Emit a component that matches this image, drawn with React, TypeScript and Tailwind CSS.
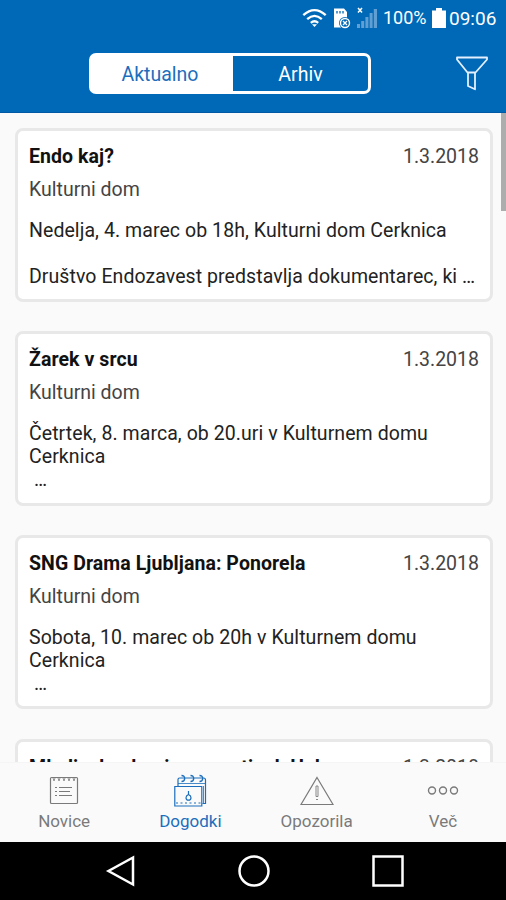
import type { ReactNode } from "react";

type Event = {
  title: string;
  date: string;
  place: string;
  lines: string[];
};

const events: Event[] = [
  {
    title: "Endo kaj?",
    date: "1.3.2018",
    place: "Kulturni dom",
    lines: ["Nedelja, 4. marec ob 18h, Kulturni dom Cerknica", "", "Društvo Endozavest predstavlja dokumentarec, ki …"],
  },
  {
    title: "Žarek v srcu",
    date: "1.3.2018",
    place: "Kulturni dom",
    lines: ["Četrtek, 8. marca, ob 20.uri v Kulturnem domu", "Cerknica", " …"],
  },
  {
    title: "SNG Drama Ljubljana: Ponorela",
    date: "1.3.2018",
    place: "Kulturni dom",
    lines: ["Sobota, 10. marec ob 20h v Kulturnem domu", "Cerknica", " …"],
  },
  {
    title: "Mladinska domicen martinek Hel",
    date: "1.3.2018",
    place: "Kulturni dom",
    lines: [],
  },
];

function StatusBar() {
  return (
    <div className="flex h-9 items-center justify-end pr-[9px] text-white">
      <svg className="mr-[7px] h-[20px] w-[25px]" viewBox="0 0 25 20" fill="none" stroke="currentColor" strokeWidth="2.3">
        <path d="M1.3 7.2Q12.5-3 23.7 7.2M5.2 11.2q7.3-6.6 14.6 0M8.8 14.8q3.7-3 7.4 0" />
        <path d="M10 16.2h5L12.5 19z" fill="currentColor" stroke="none" />
      </svg>
      <svg className="mr-[6px] h-[22px] w-[17px]" viewBox="0 0 17 22">
        <path d="M0 1.5h10L13 5v15.5H0z" fill="white" />
        <path d="M3 4v2.500M6 4v2.500M9 4v2.500" stroke="#0069b7" strokeWidth="1.3" />
        <circle cx="11" cy="16" r="6" fill="#0069b7" />
        <circle cx="11" cy="16" r="4.500" fill="none" stroke="white" strokeWidth="1.4" />
        <path d="M9 14l4 4M13 14l-4 4" stroke="white" strokeWidth="1.3" />
      </svg>
      <svg className="mr-[6px] h-[22px] w-[20px]" viewBox="0 0 20 22">
        <path d="M1 1l4 4.500M5 1L1 5.500" stroke="white" strokeWidth="1.5" />
        <path d="M0 17h3v4H0zM4.200 14h3v7h-3zM8.400 10h3v11h-3zM12.600 6h3v15h-3zM16.800 2H20v19h-3.200z" fill="#5f9fd3" />
      </svg>
      <span className="w-[43px] whitespace-nowrap text-[18px] leading-9">100%</span>
      <svg className="ml-[6px] mr-[3px] h-[22px] w-[14px]" viewBox="0 0 14 22" fill="currentColor">
        <path d="M4 1h6v2.500h4V21H0V3.500h4z" />
      </svg>
      <span className="w-[48px] whitespace-nowrap pt-px text-[19px] leading-9">09:06</span>
    </div>
  );
}

function Header() {
  return (
    <header className="h-[113px] shrink-0 border-b border-[#0059a5] bg-[#0069b7]">
      <StatusBar />
      <div className="flex items-start pl-[89px] pr-[17px] pt-[17px]">
        <div className="flex h-[41px] w-[282px] rounded-[7px] border-[3px] border-white bg-white text-[19.500px] leading-[37px]">
          <div className="w-[141px] pr-[5px] text-center text-[#1c6ebc]">Aktualno</div>
          <div className="flex-1 rounded-r-[4px] bg-[#0069b7] text-center text-white">Arhiv</div>
        </div>
        <svg className="ml-auto mt-[2px] h-[36px] w-[34px]" viewBox="0 0 34 36" fill="none" stroke="#e4f0ff" strokeWidth="1.8" strokeLinejoin="round">
          <path d="M2 2.500h30v2L20.500 17.500h-8L2 4.500z" />
          <path d="M13 17.500V31l7 3.300V17.500" />
        </svg>
      </div>
    </header>
  );
}

function EventCard({ event }: { event: Event }) {
  return (
    <article className="h-[174.500px] shrink-0 rounded-[8px] border-[3px] border-[#e8e8e8] bg-white px-[11px] pt-[14px] text-[19.500px] leading-[23px] text-[#222]">
      <div className="flex justify-between">
        <h2 className="whitespace-nowrap font-bold tracking-[0.070px] text-[#111]">{event.title}</h2>
        <span className="text-[#444]">{event.date}</span>
      </div>
      <p className="mt-[10px] text-[#444]">{event.place}</p>
      <div className="mt-[18px]">
        {event.lines.map((line, i) => (
          <p key={i} className="h-[23px] whitespace-pre tracking-[0.070px]">{line}</p>
        ))}
      </div>
    </article>
  );
}

function NewsIcon() {
  return (
    <svg className="h-[34px] w-[34px]" viewBox="0 0 34 34" fill="none" stroke="currentColor" strokeWidth="1.200">
      <rect x="3.500" y="4.500" width="27" height="26" rx="1" />
      <path d="M6 5l1 3l1-3M11 5l1 3l1-3M16 5l1 3l1-3M21 5l1 3l1-3M26 5l1 3l1-3" strokeWidth="0.800" />
      <path d="M8 14.500h2M8 18.500h2M8 22.500h2M12 14.500h13M12 18.500h11M12 22.500h13" />
    </svg>
  );
}

function CalendarIcon() {
  return (
    <svg className="h-[34px] w-[34px]" viewBox="0 0 34 34" fill="none" stroke="currentColor" strokeWidth="1.200">
      <path d="M5 13V6.500Q5 5 6.500 5h24Q32.500 5 32.500 7v23.500h-3" />
      <path d="M5 10.500h27.500M30.500 13v17" strokeWidth="0.800" />
      <path d="M1.800 13.500h27V33h-27z" />
      <path d="M3 30h25" strokeDasharray="2 2.500" />
      <path d="M8.500 8.500q3.200 0 3.200-3t-3.200-3M17.500 8.500q3.200 0 3.200-3t-3.200-3M26.500 8.500q3.200 0 3.200-3t-3.200-3" strokeWidth="1.300" />
      <path d="M15.500 18v3.500q-2.500 1.200-2.500 3.200a2.500 2.500 0 0 0 5 0q0-2-2.500-3.200" />
    </svg>
  );
}

function WarningIcon() {
  return (
    <svg className="h-[34px] w-[34px]" viewBox="0 0 34 34" fill="none" stroke="currentColor" strokeWidth="1.200">
      <path d="M17 4.500L33 31.500H1z" />
      <path d="M16 13h2v10.500h-2zM16 26.500h2" strokeWidth="0.900" />
    </svg>
  );
}

function MoreIcon() {
  return (
    <svg className="h-[34px] w-[34px]" viewBox="0 0 34 34" fill="none" stroke="currentColor" strokeWidth="1.400">
      <circle cx="6" cy="17.500" r="3.500" />
      <circle cx="17" cy="17.500" r="3.500" />
      <circle cx="28" cy="17.500" r="3.500" />
    </svg>
  );
}

function Tab({ label, active, children }: { label: string; active?: boolean; children: ReactNode }) {
  return (
    <div className={`flex flex-1 flex-col items-center pt-[10px] ${active ? "text-[#1c6ebc]" : "text-[#7a7a7a]"}`}>
      {children}
      <span className="mt-[4px] text-[17px] leading-5">{label}</span>
    </div>
  );
}

export default function App() {
  return (
    <div className="flex h-[900px] w-[506px] flex-col overflow-hidden bg-[#fafafa] font-['Roboto',sans-serif]">
      <Header />
      <main className="flex min-h-0 flex-1 overflow-hidden">
        <div className="flex flex-1 flex-col gap-[29.200px] pl-[15px] pr-[8px] pt-[14.500px]">
          {events.map((event) => (
            <EventCard key={event.title} event={event} />
          ))}
        </div>
        <div className="h-[98px] w-[5px] bg-[#adadad]" />
      </main>
      <nav className="flex h-[80px] shrink-0 border-t border-[#f5f5f5] bg-[#fafafa] pl-px">
        <Tab label="Novice"><NewsIcon /></Tab>
        <Tab label="Dogodki" active><CalendarIcon /></Tab>
        <Tab label="Opozorila"><WarningIcon /></Tab>
        <Tab label="Več"><MoreIcon /></Tab>
      </nav>
      <div className="flex h-[58px] shrink-0 items-center justify-center gap-[100px] bg-black pl-px">
        <svg className="h-[34px] w-[34px]" viewBox="0 0 34 34" fill="none" stroke="white" strokeWidth="2.500">
          <path d="M30 3.500v27L5.500 17z" />
        </svg>
        <svg className="h-[34px] w-[34px]" viewBox="0 0 34 34" fill="none" stroke="white" strokeWidth="2.500">
          <circle cx="17" cy="17" r="14.500" />
        </svg>
        <svg className="h-[34px] w-[34px]" viewBox="0 0 34 34" fill="none" stroke="white" strokeWidth="2.500">
          <rect x="2.500" y="2.500" width="29" height="29" />
        </svg>
      </div>
    </div>
  );
}
